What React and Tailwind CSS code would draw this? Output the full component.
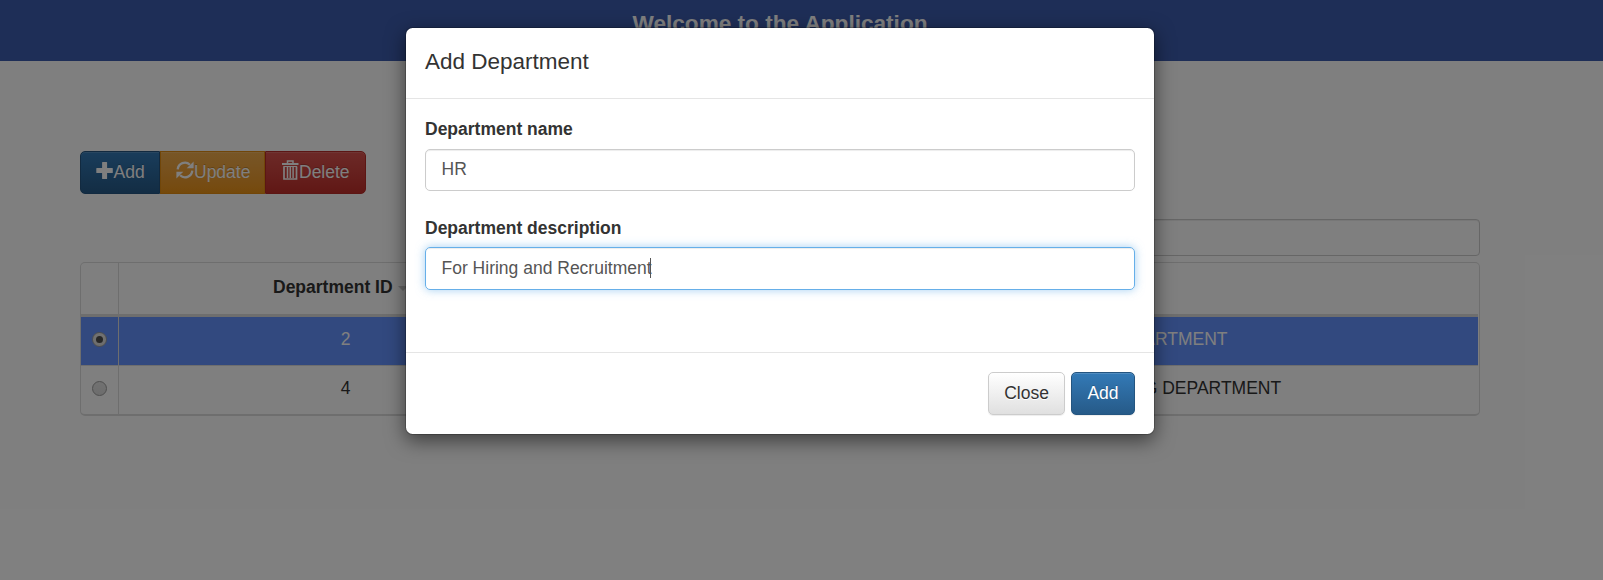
const text = 'text-[17.5px] leading-[25px]';

function PlusIcon() {
  return (
    <svg className="block h-[17px] w-[17.5px] fill-white" viewBox="0 0 17.5 17">
      <path d="M6.6 0h4a.5.5 0 0 1 .5.5V6h5.200a.5.5 0 0 1 .5.5v4a.5.5 0 0 1-.5.5h-5.200v5.500a.5.5 0 0 1-.5.5h-4a.5.5 0 0 1-.5-.5V11H.8a.5.5 0 0 1-.5-.5v-4A.5.5 0 0 1 .8 6h5.300V.5a.5.5 0 0 1 .5-.5z" />
    </svg>
  );
}

function RefreshIcon() {
  return (
    <svg className="block h-[18px] w-[18px]" viewBox="0 0 18 18">
      <path d="M1.700 8.300A7.200 7.200 0 0 1 13.900 3.800M16.300 9.700A7.200 7.200 0 0 1 4.100 14.200" fill="none" stroke="white" strokeWidth="2.300" />
      <path d="M17.600 0.600V7.200H10.700zM0.400 17.400V10.800H7.300z" fill="white" />
    </svg>
  );
}

function TrashIcon() {
  return (
    <svg className="block h-[20px] w-[18px]" viewBox="0 0 18 20" fill="none" stroke="white">
      <path d="M1 4H17.500" strokeWidth="2" />
      <path d="M6.500 3.500V1H12V3.500" strokeWidth="1.500" />
      <path d="M3 6.500V19H15.500V6.500" strokeWidth="1.700" />
      <path d="M2.500 6.500H16" strokeWidth="1" />
      <path d="M6.500 7V18M9.300 7V18M12.100 7V18" strokeWidth="1.500" />
    </svg>
  );
}

function Radio({ checked }) {
  return (
    <span className="flex h-[15px] w-[15px] items-center justify-center rounded-full border border-[#9c9c9c] bg-linear-to-b from-[#e4e4e4] to-[#dadada]">
      {checked && <span className="h-[7px] w-[7px] rounded-full bg-[#505050]" />}
    </span>
  );
}

function Row({ id, name, description, selected }) {
  return (
    <div className={`flex h-[48px] ${text} ${selected ? 'bg-[#6492fe] text-white' : 'text-[#333]'}`}>
      <div className="flex w-[37px] justify-center pt-[15px]"><Radio checked={selected} /></div>
      <div className="w-[454px] border-l border-[#ddd] pt-[10px] text-center">{id}</div>
      <div className="w-[261px] border-l border-[#ddd] pt-[10px] text-center">{name}</div>
      <div className="w-[645px] border-l border-[#ddd] pt-[10px] pl-[4px] text-center whitespace-nowrap">{description}</div>
    </div>
  );
}

const toolButton = 'flex h-[43px] items-start border text-[17.5px] leading-[25px] text-white pt-[8px] pl-[15px] shadow-[inset_0_1px_0_rgba(255,255,255,.15)] [text-shadow:0_-1px_0_rgba(0,0,0,.2)]';

export default function App() {
  return (
    <div className="relative h-[580px] w-full overflow-hidden bg-white font-['Liberation_Sans',Arial,sans-serif]">
      <header className="h-[61px] bg-[#3c5dae] pr-[43px] pt-[9px] text-center text-[22.6px] leading-[30px] font-bold text-white">
        Welcome to the Application
      </header>
      <main className="w-[1480px] pt-[90px] pl-[80px]">
        <div className="flex">
          <button className={`${toolButton} w-[80px] rounded-l-[5px] border-[#245580] bg-linear-to-b from-[#337ab7] to-[#265a88]`}>
            <span className="pt-[2px]"><PlusIcon /></span>Add
          </button>
          <button className={`${toolButton} w-[105px] border-[#e38d13] bg-linear-to-b from-[#f0ad4e] to-[#eb9316]`}>
            <span className="pt-[1px]"><RefreshIcon /></span>Update
          </button>
          <button className={`${toolButton} w-[101px] rounded-r-[5px] border-[#b92c28] bg-linear-to-b from-[#d9534f] to-[#c12e2a]`}>
            <span><TrashIcon /></span>Delete
          </button>
        </div>
        <div className="mt-[25px] ml-auto h-[37px] w-[660px] rounded-[4px] border border-[#ccc] shadow-[inset_0_1px_1px_rgba(0,0,0,.075)]" />
        <div className="mt-[6px] overflow-hidden rounded-[5px] border border-b-2 border-[#ddd] pr-px">
          <div className={`flex h-[51px] font-bold text-[#333] ${text}`}>
            <div className="w-[37px]" />
            <div className="flex w-[454px] border-l border-[#ddd] pt-[12px] pl-[154px]">
              <span>Department ID</span>
              <span className="mt-[11px] ml-[5px] h-0 w-0 border-x-[5px] border-t-[5px] border-x-transparent border-t-[#ccc]" />
            </div>
            <div className="w-[261px] pt-[12px] text-center">Department Name</div>
            <div className="w-[645px] pt-[12px]" />
          </div>
          <div className="h-[3px] bg-[#ddd]" />
          <Row id="2" name="IT" description="IT DEPARTMENT" selected />
          <div className="h-px bg-[#ddd]" />
          <Row id="4" name="ENGINEERING" description="ENGINEERING DEPARTMENT" />
        </div>
      </main>

      <div className="absolute inset-0 flex items-start justify-center bg-black/50 pt-[27px] pr-[43px]">
        <section className="h-[408px] w-[750px] rounded-[7.5px] border border-black/20 bg-white bg-clip-padding text-[#333] shadow-[0_6px_19px_rgba(0,0,0,.5)]">
          <h4 className="h-[71px] border-b border-[#e5e5e5] px-[19px] pt-[21px] text-[22.5px] leading-[25px]">Add Department</h4>
          <div className="h-[253px] px-[19px] pt-[18px]">
            <label className={`block font-bold ${text}`}>Department name</label>
            <div className="mt-[7px] h-[42px] rounded-[5px] border border-[#ccc] px-[15.5px] pt-[7px] text-[17.5px] leading-[25px] text-[#555] shadow-[inset_0_1px_1px_rgba(0,0,0,.075)]">HR</div>
            <label className={`mt-[25px] block font-bold ${text}`}>Department description</label>
            <div className="mt-[6px] flex h-[43px] rounded-[5px] border border-[#66afe9] px-[15.5px] pt-[8px] text-[17.5px] leading-[25px] text-[#555] shadow-[inset_0_1px_1px_rgba(0,0,0,.075),0_0_10px_rgba(102,175,233,.6)]">
              For Hiring and Recruitment<span className="mt-[2px] -ml-[2px] h-[20px] w-px bg-[#555]" />
            </div>
          </div>
          <footer className="flex h-[82px] justify-end gap-[6px] border-t border-[#e5e5e5] pt-[19px] pr-[19px]">
            <button className={`h-[43px] w-[77px] rounded-[5px] border border-[#ccc] bg-linear-to-b from-white to-[#e0e0e0] pb-px ${text} shadow-[inset_0_1px_0_rgba(255,255,255,.15),0_1px_1px_rgba(0,0,0,.075)] [text-shadow:0_1px_0_#fff]`}>Close</button>
            <button className={`h-[43px] w-[64px] rounded-[5px] border border-[#245580] bg-linear-to-b from-[#337ab7] to-[#265a88] pb-px text-white ${text} shadow-[inset_0_1px_0_rgba(255,255,255,.15),0_1px_1px_rgba(0,0,0,.075)] [text-shadow:0_-1px_0_rgba(0,0,0,.2)]`}>Add</button>
          </footer>
        </section>
      </div>
    </div>
  );
}
